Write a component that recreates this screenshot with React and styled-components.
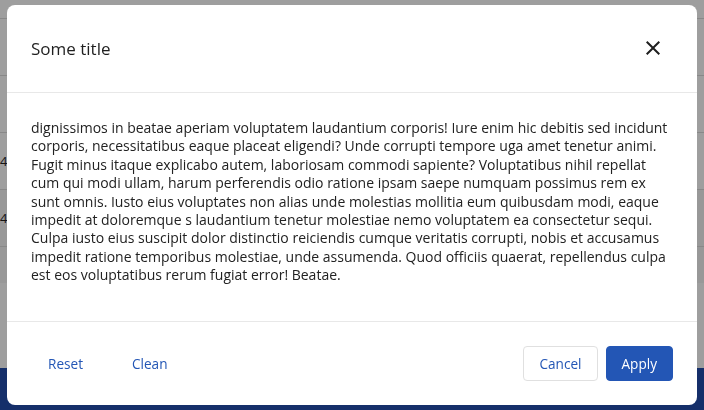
import styled, { createGlobalStyle } from "styled-components"

const GlobalStyle = createGlobalStyle`
  * { box-sizing: border-box; }
  body {
    margin: 0;
    font-family: "Open Sans", "Liberation Sans", sans-serif;
    background: #fff;
  }
`

const Page = styled.div`
  height: 410px;
  display: flex;
  flex-direction: column;
  background: #ffffff;
`

const TopStrip = styled.div`
  height: 19px;
  border-bottom: 1px solid #dcdcdc;
`

const Row = styled.div`
  height: 57px;
  display: flex;
  align-items: center;
  border-bottom: 1px solid #dcdcdc;
  background: ${(p) => (p.shaded ? "#f6f6f6" : "#fff")};
  font-size: 13px;
  color: #222;
`

const Shade = styled.div`
  height: 36px;
  background: #f6f6f6;
`

const Spacer = styled.div`
  flex: 1;
`

const BottomBar = styled.div`
  height: 42px;
  background: #224dab;
`

const Overlay = styled.div`
  position: fixed;
  inset: 0;
  background: rgba(0, 0, 0, 0.38);
  padding: 5px 7px;
  display: flex;
`

const Modal = styled.div`
  flex: 1;
  background: #fff;
  border-radius: 8px;
  display: flex;
  flex-direction: column;
  overflow: hidden;
`

const Header = styled.div`
  display: flex;
  align-items: center;
  justify-content: space-between;
  padding: 23px 24px 24px;
  border-bottom: 1px solid #e8e8e8;
`

const Title = styled.h2`
  margin: 0;
  font-size: 17px;
  font-weight: 400;
  color: #1f1f1f;
`

const CloseButton = styled.button`
  width: 40px;
  height: 40px;
  border: none;
  background: transparent;
  padding: 0;
  display: flex;
  align-items: center;
  justify-content: center;
  cursor: pointer;
  color: #1f1f1f;
`

const Body = styled.div`
  flex: 1;
  padding: 26px 24px 0;
`

const Text = styled.p`
  margin: 0;
  font-size: 14px;
  line-height: 18.4px;
  color: #222;
`

const Footer = styled.div`
  display: flex;
  align-items: center;
  padding: 24px;
  border-top: 1px solid #e8e8e8;
  gap: 8px;
`

const Group = styled.div`
  display: flex;
  gap: ${(p) => p.gap || 8}px;
`

const Button = styled.button`
  height: 35px;
  padding: 0 ${(p) => (p.variant ? 15 : 16)}px;
  font-family: "Open Sans", "Liberation Sans", sans-serif;
  font-size: 13.6px;
  border-radius: 4px;
  cursor: pointer;
  border: 1px solid
    ${(p) => (p.variant === "primary" ? "#2356b5" : p.variant === "outline" ? "#e0e0e0" : "transparent")};
  background: ${(p) => (p.variant === "primary" ? "#2356b5" : "#fff")};
  color: ${(p) => (p.variant === "primary" ? "#fff" : "#2356b5")};
`

const text =
  "dignissimos in beatae aperiam voluptatem laudantium corporis! Iure enim hic debitis sed incidunt corporis, necessitatibus eaque placeat eligendi? Unde corrupti tempore uga amet tenetur animi. Fugit minus itaque explicabo autem, laboriosam commodi sapiente? Voluptatibus nihil repellat cum qui modi ullam, harum perferendis odio ratione ipsam saepe numquam possimus rem ex sunt omnis. Iusto eius voluptates non alias unde molestias mollitia eum quibusdam modi, eaque impedit at doloremque s laudantium tenetur molestiae nemo voluptatem ea consectetur sequi. Culpa iusto eius suscipit dolor distinctio reiciendis cumque veritatis corrupti, nobis et accusamus impedit ratione temporibus molestiae, unde assumenda. Quod officiis quaerat, repellendus culpa est eos voluptatibus rerum fugiat error! Beatae."

const App = () => {
  return (
    <>
      <GlobalStyle />
      <Page>
        <TopStrip />
        <Row />
        <Row />
        <Row>4</Row>
        <Row shaded>4</Row>
        <Shade />
        <Spacer />
        <BottomBar />
      </Page>
      <Overlay>
        <Modal>
          <Header>
            <Title>Some title</Title>
            <CloseButton aria-label="close">
              <svg width="24" height="24" viewBox="0 0 24 24" fill="currentColor">
                <path d="M19 6.41 17.59 5 12 10.59 6.41 5 5 6.41 10.59 12 5 17.59 6.41 19 12 13.41 17.59 19 19 17.59 13.41 12z" />
              </svg>
            </CloseButton>
          </Header>
          <Body>
            <Text>{text}</Text>
          </Body>
          <Footer>
            <Group gap={15}>
              <Button>Reset</Button>
              <Button>Clean</Button>
            </Group>
            <Spacer />
            <Group>
              <Button variant="outline">Cancel</Button>
              <Button variant="primary">Apply</Button>
            </Group>
          </Footer>
        </Modal>
      </Overlay>
    </>
  )
}

export default App
